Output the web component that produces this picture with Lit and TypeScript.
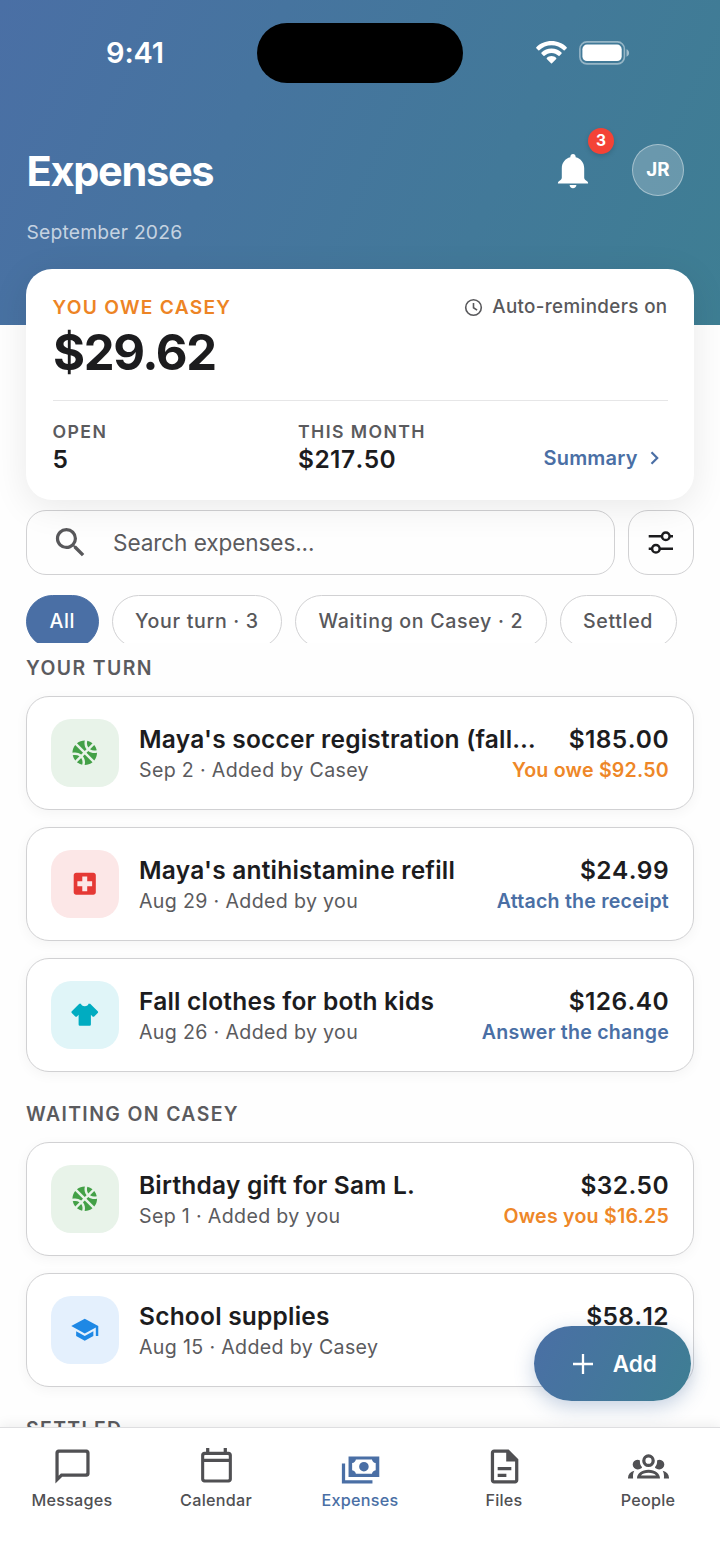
import { LitElement, html, css, svg } from "lit";
import { customElement, property } from "lit/decorators.js";
import { classMap } from "lit/directives/class-map.js";

type Category = "activity" | "medical" | "clothes" | "school";

interface Expense {
  title: string;
  meta: string;
  amount: string;
  action: string;
  tone: "warn" | "link";
  category: Category;
}

const YOUR_TURN: Expense[] = [
  { title: "Maya's soccer registration (fall season)", meta: "Sep 2 · Added by Casey", amount: "$185.00", action: "You owe $92.50", tone: "warn", category: "activity" },
  { title: "Maya's antihistamine refill", meta: "Aug 29 · Added by you", amount: "$24.99", action: "Attach the receipt", tone: "link", category: "medical" },
  { title: "Fall clothes for both kids", meta: "Aug 26 · Added by you", amount: "$126.40", action: "Answer the change", tone: "link", category: "clothes" },
];

const WAITING: Expense[] = [
  { title: "Birthday gift for Sam L.", meta: "Sep 1 · Added by you", amount: "$32.50", action: "Owes you $16.25", tone: "warn", category: "activity" },
  { title: "School supplies", meta: "Aug 15 · Added by Casey", amount: "$58.12", action: "Request sent", tone: "link", category: "school" },
];

const CATEGORY_ICONS = {
  activity: svg`<path d="M17.09 11h4.86c-.16-1.61-.71-3.11-1.54-4.4-1.73.83-2.99 2.45-3.32 4.4zM6.91 11c-.33-1.95-1.59-3.57-3.32-4.4-.83 1.29-1.38 2.79-1.54 4.4h4.86zM15.07 11c.32-2.59 1.88-4.79 4.06-6-1.6-1.63-3.74-2.71-6.13-2.95V11h2.07zM8.93 11H11V2.05C8.61 2.29 6.46 3.37 4.87 5c2.18 1.21 3.74 3.41 4.06 6zM15.07 13H13v8.95c2.39-.24 4.54-1.32 6.13-2.95-2.18-1.21-3.74-3.41-4.06-6zM3.59 17.4c1.73-.83 2.99-2.45 3.32-4.4H2.05c.16 1.61.71 3.11 1.54 4.4zM17.09 13c.33 1.95 1.59 3.57 3.32 4.4.83-1.29 1.38-2.79 1.54-4.4h-4.86zM8.93 13c-.32 2.59-1.88 4.79-4.06 6 1.6 1.63 3.74 2.71 6.13 2.95V13H8.93z" transform="rotate(-45 12 12)"/>`,
  medical: svg`<path d="M19 3H5c-1.1 0-1.99.9-1.99 2L3 19c0 1.1.9 2 2 2h14c1.1 0 2-.9 2-2V5c0-1.1-.9-2-2-2zm-1 11h-4v4h-4v-4H6v-4h4V6h4v4h4v4z"/>`,
  clothes: svg`<path d="M16 21H8a1 1 0 0 1-1-1v-7.93l-1.3 1.3c-.39.39-1.02.39-1.42 0L1.46 10.54a1 1 0 0 1 0-1.41L7.59 3H9c0 1.1 1.34 2 3 2s3-.9 3-2h1.41l6.13 6.13a1 1 0 0 1 0 1.41l-2.83 2.83c-.39.39-1.02.39-1.41 0L17 12.07V20a1 1 0 0 1-1 1z"/>`,
  school: svg`<path d="M5 13.18v4L12 21l7-3.82v-4L12 17l-7-3.82zM12 3 1 9l11 6 9-4.91V17h2V9L12 3z"/>`,
};

const NAV_ICONS = {
  messages: svg`<path fill-rule="evenodd" d="M2 22V3.9C2 2.9 2.8 2 3.8 2h16.4c1 0 1.8.9 1.8 1.9v12.3c0 1-.8 1.8-1.8 1.8H6L2 22zm3.2-5.9h14.4c.3 0 .5-.2.5-.5V4.4c0-.3-.2-.5-.5-.5H4.4c-.3 0-.5.2-.5.5v13l1.3-1.3z"/>`,
  calendar: svg`<path transform="translate(0 .3)" fill-rule="evenodd" d="M5.9.9h1.9v2.2h8.4V.9h1.9v2.2h1c1.1 0 1.9.8 1.9 1.9v14.2c0 1.1-.8 1.9-1.9 1.9H4.9C3.8 21.1 3 20.3 3 19.2V5c0-1.1.8-1.9 1.9-1.9h1V.9zM4.8 7.2h14.4V5.4c0-.3-.2-.5-.5-.5H5.3c-.3 0-.5.2-.5.5v1.8zm0 1.9v9.7c0 .3.2.5.5.5h13.4c.3 0 .5-.2.5-.5V9.1H4.8z"/>`,
  expenses: svg`<path fill-rule="evenodd" d="M5 6.1h18v12H5v-12zM9.3 7.9c-.2 1.1-.9 1.9-2.2 2.1v4.2c1.3.2 2 1 2.2 2.1h9.4c.2-1.1.9-1.9 2.2-2.1V10c-1.3-.2-2-1-2.2-2.1H9.3zM14 9.3a2.8 2.8 0 1 1 0 5.6 2.8 2.8 0 0 1 0-5.6zM1.1 10.2H3V20h16v1.900H1.100V10.200z"/>`,
  files: svg`<path fill-rule="evenodd" d="M5.9 2h8.5l5.7 5.7v12.4c0 1-.9 1.9-1.9 1.9H5.9C4.8 22 4 21.1 4 20.1V3.9C4 2.9 4.8 2 5.9 2zm0 1.9v16.2h12.300V9H13V3.900H5.900zM8 12.300h8v1.900H8v-1.900zm0 3.900h5.100v1.900H8v-1.900z"/>`,
  people: svg`<path fill-rule="evenodd" d="M12 4.900a3.700 3.700 0 1 1 0 7.400 3.700 3.700 0 0 1 0-7.400zm0 1.900a1.800 1.800 0 1 0 0 3.600 1.800 1.800 0 0 0 0-3.600zM5.500 8c.6 0 1.100.1 1.500.5-.2 1.500.3 2.900 1.300 3.900-.5.800-1.500 1.300-2.600 1.300A2.800 2.800 0 0 1 5.500 8zm13 0c-.6 0-1.100.1-1.500.5.2 1.500-.3 2.900-1.300 3.900.5.800 1.500 1.300 2.600 1.300A2.800 2.800 0 0 0 18.500 8zM5.300 19c-.2-2.600 2.600-5.100 6.700-5.100s6.900 2.500 6.700 5.100H5.300zm2.300-1.800h8.800c-.7-.9-2.400-1.500-4.400-1.500s-3.700.6-4.400 1.500zM0 19c-.1-2.300 1.200-3.900 3.700-4.500C3 15.600 2.800 17.300 3 19H0zm24 0c.1-2.300-1.200-3.900-3.700-4.500.7 1.100.9 2.800.7 4.500h3z"/>`,
};

@customElement("expense-row")
class ExpenseRow extends LitElement {
  @property({ attribute: false }) expense!: Expense;

  static styles = css`
    :host { display: block; min-width: 0; }
    .row {
      display: flex; align-items: center; gap: 20px; box-sizing: border-box; height: 114px; padding: 0 24px 0 23.5px;
      background: #fff; border: 1.5px solid #d1d1d3; border-radius: 23px;
      box-shadow: 0 3px 13px rgba(0, 0, 0, 0.045);
    }
    .tile { flex: none; display: grid; place-items: center; width: 68.5px; height: 68.5px; border-radius: 20px; }
    .tile svg { width: 29.5px; height: 29.5px; fill: currentColor; }
    .activity { background: #e8f3e9; color: #43a047; }
    .medical { background: #fce7e7; color: #e53935; }
    .clothes { background: #e0f5f8; color: #00acc1; }
    .school { background: #e4f0fd; color: #1e88e5; }
    .body { flex: 1; min-width: 0; display: flex; flex-direction: column; }
    .line { display: flex; justify-content: space-between; align-items: center; }
    .line.top { height: 33px; gap: 32px; }
    .line.bottom { height: 28px; gap: 12px; }
    .title, .amount { font-size: 24.5px; font-weight: 600; color: #1c1c1e; white-space: nowrap; line-height: 33px; letter-spacing: 0.22px; }
    .title { overflow: hidden; text-overflow: ellipsis; min-width: 0; }
    .amount { flex: none; font-kerning: none; letter-spacing: 0.4px; }
    .meta { font-size: 19.6px; color: #5b5b5e; letter-spacing: 0.34px; white-space: nowrap; }
    .action { font-size: 19.6px; font-weight: 600; letter-spacing: 0.22px; white-space: nowrap; }
    .warn { color: #ee8728; }
    .link { color: #4a6fa5; }
  `;

  render() {
    const e = this.expense;
    return html`
      <article class="row">
        <div class="tile ${e.category}"><svg viewBox="0 0 24 24">${CATEGORY_ICONS[e.category]}</svg></div>
        <div class="body">
          <div class="line top"><span class="title">${e.title}</span><span class="amount">${e.amount}</span></div>
          <div class="line bottom"><span class="meta">${e.meta}</span><span class="action ${e.tone}">${e.action}</span></div>
        </div>
      </article>`;
  }
}

@customElement("app-root")
class AppRoot extends LitElement {
  static styles = css`
    :host {
      display: block; width: 720px; height: 1565px; overflow: hidden; background: #fefefe;
      font-family: Inter, "Liberation Sans", sans-serif; color: #1c1c1e;
    }
    svg { display: block; flex: none; }
    .screen { position: relative; display: flex; flex-direction: column; height: 1565px; }
    .header {
      flex: none; box-sizing: border-box; height: 324.5px; color: #fff;
      background: linear-gradient(114deg, #4a6fa5 0%, #3e7e93 100%);
    }
    .status { display: grid; grid-template-columns: 257px 206px 257px; align-items: center; height: 105px; }
    .time { padding: 1px 0 0 13px; text-align: center; font-size: 29px; font-weight: 600; letter-spacing: -0.1px; line-height: 36px; }
    .island { height: 60px; border-radius: 30px; background: #000; }
    .indicators { display: flex; align-items: center; gap: 12.5px; padding-left: 72.5px; }
    .titlebar { display: flex; align-items: center; height: 130px; padding: 0 36px 0 26.5px; }
    .heading { flex: 1; font-size: 41.5px; font-weight: 700; letter-spacing: -1.3px; line-height: 52px; margin: 0; padding-top: 1.5px; }
    .bell { position: relative; width: 32px; height: 36px; margin: 2px 43px 0 0; }
    .bell svg { width: 32px; height: 36px; }
    .count {
      position: absolute; left: 31px; top: -25.5px; width: 26px; height: 26px; border-radius: 13px; background: #f44336;
      font-size: 15.5px; font-weight: 700; line-height: 26px; text-align: center; box-shadow: 0 2px 5px rgba(0, 0, 0, 0.15);
    }
    .avatar {
      box-sizing: border-box; width: 52px; height: 52px; border-radius: 50%; background: rgba(255, 255, 255, 0.22);
      border: 1.5px solid rgba(255, 255, 255, 0.4); text-align: center; line-height: 50.5px; font-size: 18.8px; font-weight: 700;
    }
    .period { margin-top: -16px; padding-left: 26.5px; font-size: 19.3px; letter-spacing: 0.2px; line-height: 26px; color: rgba(255, 255, 255, 0.7); }

    .summary {
      position: relative; flex: none; box-sizing: border-box; height: 231px; margin: -55.5px 26px 0; padding: 26px 26.5px 0;
      background: #fff; border-radius: 26px; box-shadow: 0 7px 36px rgba(0, 0, 0, 0.085);
    }
    .spread { display: flex; justify-content: space-between; align-items: center; }
    .owe { font-size: 19.2px; font-weight: 600; letter-spacing: 1.27px; line-height: 24px; color: #ed8425; }
    .auto { display: flex; align-items: center; gap: 9px; font-size: 18.8px; font-weight: 500; letter-spacing: 0.36px; color: #58585b; line-height: 24px; }
    .total { padding-left: 0.5px; font-size: 49px; font-weight: 700; letter-spacing: -1.35px; line-height: 67px; }
    .stats { display: grid; grid-template-columns: 245.5px 245px 1fr; margin-top: 14px; padding-top: 18px; border-top: 1px solid #e6e6e7; }
    .stat { font-size: 24.5px; font-weight: 600; line-height: 28px; letter-spacing: 0.45px; font-kerning: none; }
    .stat .cap { display: block; font-size: 17.7px; letter-spacing: 1.4px; line-height: 26px; color: #5b5b5e; font-kerning: auto; }
    .more { display: flex; align-items: center; gap: 12.5px; margin-top: 26.5px; height: 24px; padding-left: 0.5px; color: #4a6fa5; font-size: 20px; font-weight: 600; letter-spacing: 0.2px; }

    .tools { flex: none; display: flex; gap: 13px; padding: 10px 26px 0; }
    .search {
      flex: 1; box-sizing: border-box; height: 65px; display: flex; align-items: center; gap: 23px; padding-left: 24px;
      border: 1.5px solid #d1d1d3; border-radius: 20px; font-size: 22.6px; letter-spacing: -0.1px; color: #5b5b5e;
    }
    .filter { box-sizing: border-box; width: 66px; height: 65px; display: grid; place-items: center; border: 1.5px solid #d1d1d3; border-radius: 20px; }
    .chips { position: relative; flex: none; display: flex; gap: 13px; height: 48px; margin-top: 20px; padding-left: 26px; overflow: hidden; }
    .chip {
      flex: none; box-sizing: border-box; height: 52.5px; padding: 0 22.4px; border: 1.5px solid #d1d1d3; border-radius: 26.5px; background: #fff;
      font-size: 19.6px; font-weight: 500; letter-spacing: 0.67px; line-height: 50.5px; color: #58585b; white-space: nowrap;
    }
    .chip.on { background: #4a6fa5; border-color: #4a6fa5; color: #fff; }

    .list { flex: 1; min-height: 0; overflow: hidden; padding: 0 26px; }
    .group { display: grid; grid-template-columns: minmax(0, 1fr); gap: 17px; }
    .group + .section { margin-top: 27px; }
    .section { margin: 0; font-size: 19.4px; font-weight: 600; letter-spacing: 1.4px; line-height: 30px; color: #5b5b5e; }
    .first { padding: 10px 0 13px; }
    .next { padding: 0 0 13px; }

    .add {
      position: absolute; left: 534px; top: 1326px; box-sizing: border-box; width: 156.5px; height: 75px; padding-left: 5px;
      display: flex; align-items: center; justify-content: center; gap: 20px; border-radius: 37.5px; color: #fff;
      font-size: 22.5px; font-weight: 600; background: linear-gradient(115.6deg, #4a6fa5 0%, #3e7e93 100%);
      box-shadow: 0 6px 20px rgba(74, 111, 165, 0.32);
    }
    .nav {
      position: relative; flex: none; box-sizing: border-box; height: 138px; display: grid; grid-template-columns: repeat(5, 144px);
      background: #fff; border-top: 1px solid #dedee0; box-shadow: 0 -2px 12px rgba(0, 0, 0, 0.07);
    }
    .tab { display: flex; flex-direction: column; align-items: center; padding-top: 18px; color: #505053; font-size: 16.2px; font-weight: 500; letter-spacing: 0.25px; line-height: 22px; }
    .tab svg { width: 41px; height: 41px; fill: currentColor; margin-bottom: 2px; }
    .tab.current { color: #4a6fa5; }
  `;

  private tab(label: string, icon: keyof typeof NAV_ICONS, current = false) {
    return html`<div class=${classMap({ tab: true, current })}><svg viewBox="0 0 24 24">${NAV_ICONS[icon]}</svg>${label}</div>`;
  }

  render() {
    return html`
      <div class="screen">
        <header class="header">
          <div class="status">
            <div class="time">9:41</div>
            <div class="island"></div>
            <div class="indicators">
              <svg width="31" height="23" viewBox="0 0 31 23" fill="#fff">
                <path d="M15.5 0C21.5 0 26.9 2.3 30.7 6.2c.3.3.3.8 0 1.1l-2 2c-.3.3-.7.3-1 0C24.5 6.2 20.2 4.3 15.5 4.3S6.5 6.2 3.3 9.3c-.3.3-.7.3-1 0l-2-2c-.3-.3-.3-.8 0-1.1C4.1 2.3 9.5 0 15.5 0z"/>
                <path d="M15.5 7.6c3.9 0 7.4 1.5 10 4 .3.3.3.8 0 1.1l-2 2c-.3.3-.7.3-1 0-1.900-1.700-4.300-2.800-7-2.800s-5.100 1.100-7 2.800c-.3.300-.7.300-1 0l-2-2c-.3-.3-.3-.8 0-1.100 2.600-2.500 6.100-4 10-4z"/>
                <path d="M15.5 15.1c1.8 0 3.5.7 4.7 1.8.3.3.3.8 0 1.1L16 22.3c-.3.3-.7.3-1 0L10.800 18c-.3-.3-.3-.8 0-1.100 1.200-1.100 2.900-1.800 4.700-1.800z"/>
              </svg>
              <svg width="51" height="24" viewBox="0 0 51 24">
                <rect x=".9" y=".9" width="44.5" height="22" rx="7" fill="none" stroke="#fff" stroke-opacity=".45" stroke-width="1.6"/>
                <rect x="3.4" y="3.6" width="39.3" height="16.4" rx="4.6" fill="#fff"/>
                <path d="M47.5 8.3c1.6.6 2.6 2 2.6 3.7s-1 3.100-2.600 3.700V8.300z" fill="#fff" fill-opacity=".5"/>
              </svg>
            </div>
          </div>
          <div class="titlebar">
            <h1 class="heading">Expenses</h1>
            <div class="bell">
              <svg viewBox="0 0 32 36" fill="#fff">
                <path d="M13.300 4.300V4C13.300 2.300 14.500 1 16 1s2.700 1.300 2.700 3v.3c5.100 1.200 8.500 5.500 8.500 10.900v9.600c0 1 .4 1.700 1.200 2.200l1.700 1.300c.8.600 1 1.100 1 2.100H.9c0-1 .2-1.500 1-2.100L3.600 27c.8-.5 1.200-1.200 1.200-2.200v-9.600c0-5.400 3.400-9.700 8.500-10.900z"/>
                <path d="M12.600 32.100h6.800c0 2-1.500 3.200-3.400 3.200s-3.400-1.200-3.400-3.200z"/>
              </svg>
              <span class="count">3</span>
            </div>
            <div class="avatar">JR</div>
          </div>
          <div class="period">September 2026</div>
        </header>

        <section class="summary">
          <div class="spread">
            <span class="owe">YOU OWE CASEY</span>
            <span class="auto">
              <svg width="19" height="19" viewBox="0 0 19 19" fill="none" stroke="currentColor" stroke-width="1.6"><circle cx="9.5" cy="9.5" r="7.8"/><path d="M9.5 4.9v4.8l3.6 2.4"/></svg>
              Auto-reminders on
            </span>
          </div>
          <div class="total">$29.62</div>
          <div class="stats">
            <div class="stat"><span class="cap">OPEN</span>5</div>
            <div class="stat"><span class="cap">THIS MONTH</span>$217.50</div>
            <div class="more">Summary
              <svg width="10" height="14" viewBox="0 0 10 14" fill="none" stroke="currentColor" stroke-width="2.2"><path d="m1.5 1.3 5.7 5.7-5.7 5.7"/></svg>
            </div>
          </div>
        </section>

        <div class="tools">
          <div class="search">
            <svg width="39" height="39" viewBox="0 0 24 24" fill="#58585b"><path d="M15.5 14h-.79l-.28-.27A6.471 6.471 0 0 0 16 9.5 6.5 6.5 0 1 0 9.5 16c1.61 0 3.09-.59 4.23-1.57l.27.28v.79l5 4.99L20.49 19l-4.99-5zm-6 0C7.01 14 5 11.99 5 9.5S7.01 5 9.5 5 14 7.01 14 9.5 11.99 14 9.5 14z"/></svg>
            <span>Search expenses...</span>
          </div>
          <div class="filter">
            <svg width="26" height="25" viewBox="0 0 26 25" fill="none" stroke="#1c1c1e" stroke-width="2.5"><path d="M.7 6.300h13.200M21.800 6.300H25M.7 18.800h3.200M11.800 18.800H25"/><circle cx="17.800" cy="6.300" r="3.800"/><circle cx="7.900" cy="18.800" r="3.800"/></svg>
          </div>
        </div>

        <div class="chips">
          <div class="chip on">All</div>
          <div class="chip">Your turn · 3</div>
          <div class="chip">Waiting on Casey · 2</div>
          <div class="chip">Settled</div>
        </div>

        <main class="list">
          <h2 class="section first">YOUR TURN</h2>
          <div class="group">${YOUR_TURN.map((e) => html`<expense-row .expense=${e}></expense-row>`)}</div>
          <h2 class="section next">WAITING ON CASEY</h2>
          <div class="group">${WAITING.map((e) => html`<expense-row .expense=${e}></expense-row>`)}</div>
          <h2 class="section next">SETTLED</h2>
        </main>

        <div class="add">
          <svg width="20" height="20" viewBox="0 0 20 20" stroke="#fff" stroke-width="2.3"><path d="M10 0v20M0 10h20"/></svg>
          Add
        </div>

        <nav class="nav">
          ${this.tab("Messages", "messages")}
          ${this.tab("Calendar", "calendar")}
          ${this.tab("Expenses", "expenses", true)}
          ${this.tab("Files", "files")}
          ${this.tab("People", "people")}
        </nav>
      </div>`;
  }
}
